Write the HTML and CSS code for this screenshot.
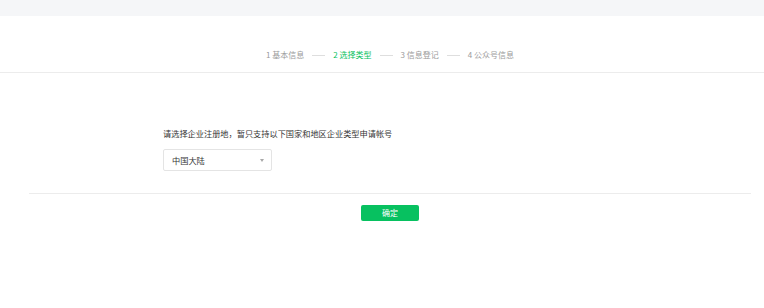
FILE: index.html
```html
<!DOCTYPE html>
<html lang="zh-CN">
<head>
<meta charset="utf-8">
<title>选择类型</title>
<link rel="stylesheet" href="styles.css">
</head>
<body>
<div class="topbar"></div>
<header class="header">
  <div class="wrap">
    <ol class="steps">
      <li class="step">1 基本信息</li>
      <li class="sep"></li>
      <li class="step active">2 选择类型</li>
      <li class="sep"></li>
      <li class="step">3 信息登记</li>
      <li class="sep"></li>
      <li class="step">4 公众号信息</li>
    </ol>
  </div>
</header>
<main class="wrap main">
  <div class="form">
    <p class="tip">请选择企业注册地，暂只支持以下国家和地区企业类型申请帐号</p>
    <div class="select">
      <span class="select-label">中国大陆</span>
      <span class="arrow"></span>
    </div>
  </div>
  <div class="footer">
    <button class="btn" type="button">确定</button>
  </div>
</main>
</body>
</html>
```
FILE: styles.css
```css
* { box-sizing: border-box; }
html, body {
  margin: 0;
  padding: 0;
  background: #ffffff;
  font-family: "Noto Sans CJK SC", "Noto Sans", "Liberation Sans", sans-serif;
  color: #353535;
}
.topbar {
  height: 16px;
  background: #f5f6f8;
}
.header {
  height: 57px;
  border-bottom: 1px solid #ececec;
}
.wrap {
  margin-left: 29px;
  width: 722px;
}
.steps {
  list-style: none;
  margin: 0;
  padding: 33px 0 0;
  display: flex;
  justify-content: center;
  align-items: center;
  gap: 6px;
  font-size: 8px;
  line-height: 12px;
  color: #9a9a9a;
}
.step { white-space: nowrap; }
.step.active { color: #07c160; }
.sep {
  width: 13px;
  height: 1px;
  background: #dedede;
  margin: 0 2px;
}
.main {
  padding-top: 54px;
}
.form {
  padding-left: 134px;
  padding-bottom: 22px;
  border-bottom: 1px solid #ececec;
}
.tip {
  margin: 0;
  font-size: 8.2px;
  line-height: 12px;
  color: #353535;
}
.select {
  margin-top: 10px;
  width: 109px;
  height: 22px;
  border: 1px solid #e4e4e4;
  border-radius: 2px;
  display: flex;
  align-items: center;
  justify-content: space-between;
  padding: 0 7px 0 8px;
  font-size: 8.2px;
  color: #353535;
}
.arrow {
  width: 0;
  height: 0;
  border-left: 2.5px solid transparent;
  border-right: 2.5px solid transparent;
  border-top: 3px solid #a8a8a8;
}
.footer {
  display: flex;
  justify-content: center;
  padding-top: 11px;
}
.btn {
  width: 58px;
  height: 16px;
  border: 0;
  border-radius: 2px;
  background: #07c160;
  color: #ffffff;
  font-family: inherit;
  font-size: 8px;
  line-height: 16px;
  padding: 0;
}
```
